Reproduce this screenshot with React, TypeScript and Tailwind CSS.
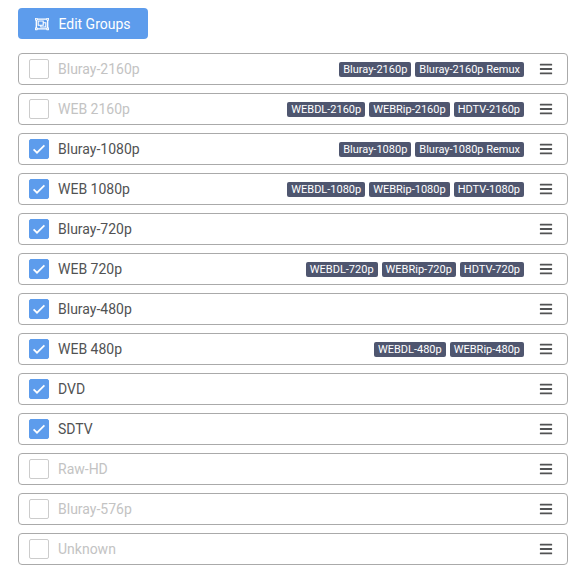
import { FaBars, FaRegObjectGroup } from 'react-icons/fa';

type Quality = { name: string; allowed: boolean; tags?: string[] };

const qualities: Quality[] = [
  { name: 'Bluray-2160p', allowed: false, tags: ['Bluray-2160p', 'Bluray-2160p Remux'] },
  { name: 'WEB 2160p', allowed: false, tags: ['WEBDL-2160p', 'WEBRip-2160p', 'HDTV-2160p'] },
  { name: 'Bluray-1080p', allowed: true, tags: ['Bluray-1080p', 'Bluray-1080p Remux'] },
  { name: 'WEB 1080p', allowed: true, tags: ['WEBDL-1080p', 'WEBRip-1080p', 'HDTV-1080p'] },
  { name: 'Bluray-720p', allowed: true },
  { name: 'WEB 720p', allowed: true, tags: ['WEBDL-720p', 'WEBRip-720p', 'HDTV-720p'] },
  { name: 'Bluray-480p', allowed: true },
  { name: 'WEB 480p', allowed: true, tags: ['WEBDL-480p', 'WEBRip-480p'] },
  { name: 'DVD', allowed: true },
  { name: 'SDTV', allowed: true },
  { name: 'Raw-HD', allowed: false },
  { name: 'Bluray-576p', allowed: false },
  { name: 'Unknown', allowed: false },
];

function CheckBox({ checked }: { checked: boolean }) {
  return (
    <span
      className={`flex size-5 shrink-0 items-center justify-center rounded-xs border ${
        checked ? 'border-[#5d9cec] bg-[#5d9cec]' : 'border-[#ccc] bg-white'
      }`}
    >
      {checked && (
        <svg viewBox="0 0 14 14" className="size-3.5 shrink-0" fill="none" stroke="white" strokeWidth="1.7">
          <path d="M1.6 7.3 5 10.7 12.4 3.3" />
        </svg>
      )}
    </span>
  );
}

function QualityRow({ quality }: { quality: Quality }) {
  return (
    <li className="flex h-8 items-center rounded-sm border border-[#aaa] bg-white pr-[14px] pl-[10px]">
      <CheckBox checked={quality.allowed} />
      <span className={`ml-[9px] flex-1 pb-px text-sm ${quality.allowed ? 'text-[#515253]' : 'text-[#c3c3c3]'}`}>
        {quality.name}
      </span>
      <span className="flex gap-1">
        {quality.tags?.map((tag) => (
          <span
            key={tag}
            className="h-[15px] rounded-xs bg-[#4f566f] px-1 text-[11px] leading-[15px] whitespace-nowrap text-white"
          >
            {tag}
          </span>
        ))}
      </span>
      <FaBars className="mb-px ml-[15px] size-3.5 text-[#515253]" />
    </li>
  );
}

export default function App() {
  return (
    <main className="h-[583px] w-[581px] bg-white pt-2 pr-[13px] pl-[18px] font-['Roboto',sans-serif] text-[#515253]">
      <button className="flex h-[31px] w-[130px] items-center justify-center rounded-sm bg-[#5d9cec] text-sm text-white">
        <FaRegObjectGroup className="mr-[9px] size-3.5" />
        Edit Groups
      </button>
      <ul className="mt-3.5 flex flex-col gap-2">
        {qualities.map((quality) => (
          <QualityRow key={quality.name} quality={quality} />
        ))}
      </ul>
    </main>
  );
}
